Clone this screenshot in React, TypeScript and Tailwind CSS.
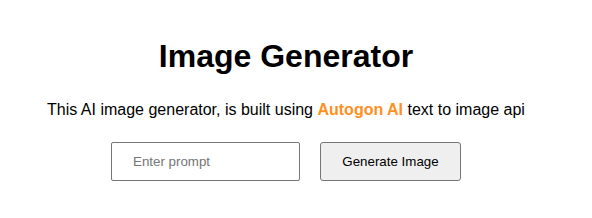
export default function App() {
  return (
    <div className="w-[572px] text-center text-black" style={{ fontFamily: '"Liberation Sans", Arial, sans-serif' }}>
      <h1 className="pt-[38px] text-[32px] font-bold leading-[37px]">Image Generator</h1>
      <p className="mt-[26px] text-[16px] leading-[18px]">
        This AI image generator, is built using{" "}
        <span className="font-bold text-[#ff8f1f]">Autogon AI</span> text to image api
      </p>
      <div className="mt-[23px] flex justify-center gap-[20px]">
        <input
          placeholder="Enter prompt"
          className="h-[39px] w-[189px] rounded-[2px] border border-[#767676] pl-[21px] text-[13.33px] placeholder:text-[#757575] outline-none"
        />
        <button className="h-[39px] w-[141px] rounded-[3px] border border-[#767676] bg-[#efefef] text-[13.33px]">
          Generate Image
        </button>
      </div>
    </div>
  );
}
